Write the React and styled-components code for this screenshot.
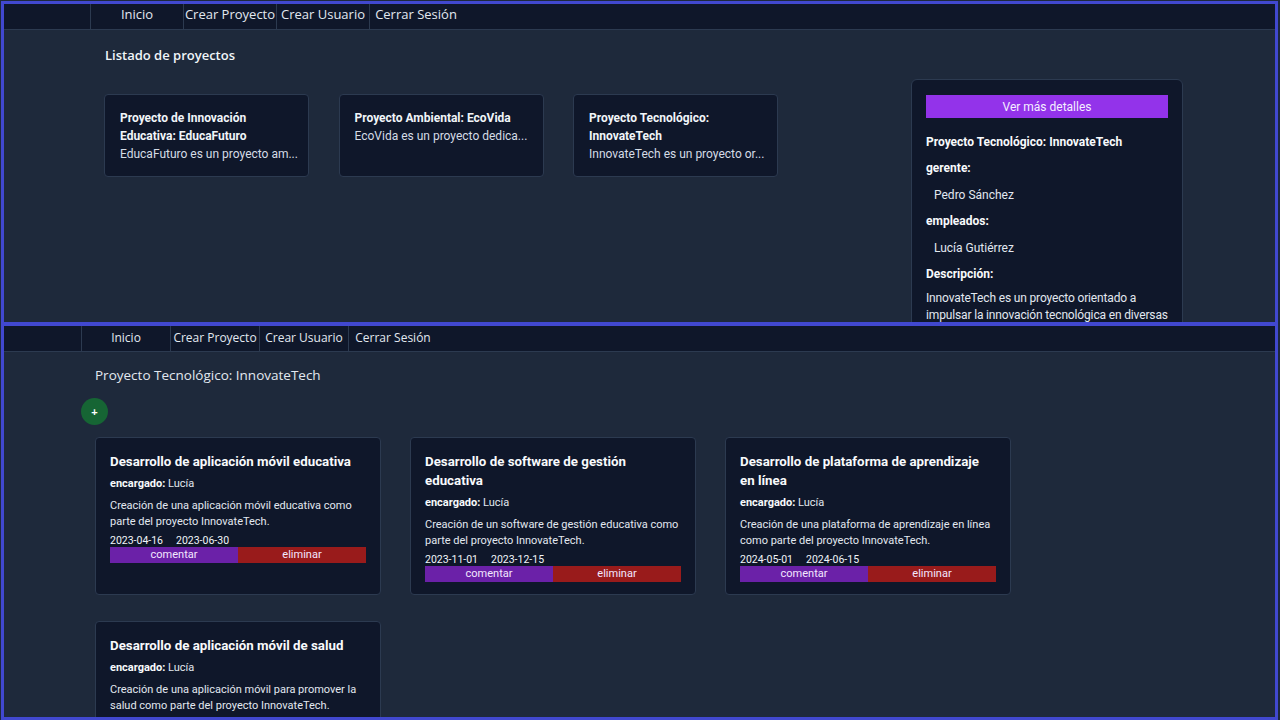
import React from "react";
import styled, { createGlobalStyle } from "styled-components";

const GlobalStyle = createGlobalStyle`
    html, body {
        margin: 0;
        padding: 0;
        background: #1e293b;
    }
    * {
        box-sizing: border-box;
    }
`;

const Stack = styled.div`
    display: flex;
    flex-direction: column;
    width: 1280px;
    height: 720px;
    overflow: hidden;
`;

const Frame = styled.div`
    margin-left: 1px;
    margin-top: ${(p) => p.$top}px;
    width: 1277px;
    height: ${(p) => p.$height}px;
    border: 3px solid #4148cf;
    border-top-width: ${(p) => p.$borderTop}px;
    background: #1e293b;
    overflow: hidden;
    display: flex;
    flex-direction: column;
`;

const Nav = styled.nav`
    display: flex;
    height: ${(p) => p.$h}px;
    flex: 0 0 auto;
    padding-left: ${(p) => p.$pad}px;
    background: #0f172a;
    border-bottom: 1px solid #2c3a50;
`;

const NavItem = styled.a`
    width: ${(p) => p.$w}px;
    display: flex;
    align-items: center;
    justify-content: center;
    padding-bottom: ${(p) => p.$lift}px;
    border-left: 1px solid #2c3a50;
    color: #e2e8f0;
    font-family: "Open Sans", "Noto Sans", sans-serif;
    font-size: ${(p) => p.$size}px;
    white-space: nowrap;
    cursor: pointer;
`;

/* ---------- listado ---------- */

const ListMain = styled.main`
    display: flex;
    align-items: flex-start;
    padding-left: 100px;
    font-family: Roboto, sans-serif;
`;

const ListColumn = styled.section`
    width: 675px;
    padding-top: 16px;
`;

const PageTitle = styled.h2`
    margin: 0 0 30px 1px;
    font-family: "Open Sans", "Noto Sans", sans-serif;
    font-size: 13px;
    line-height: 18px;
    font-weight: 600;
    color: #f1f5f9;
`;

const ProjectGrid = styled.div`
    display: grid;
    grid-template-columns: repeat(3, 205px);
    column-gap: 29.5px;
`;

const ProjectCard = styled.div`
    background: #0f172a;
    border: 1px solid #2c3a50;
    border-radius: 4px;
    padding: 14px 15px 13px;
    min-height: 83px;
    cursor: pointer;
`;

const ProjectName = styled.div`
    font-size: 12px;
    line-height: 18px;
    font-weight: 700;
    color: #f1f5f9;
`;

const ProjectSummary = styled.div`
    font-size: 12px;
    line-height: 18px;
    color: #d5dce6;
    white-space: nowrap;
`;

const Details = styled.aside`
    margin-left: 132px;
    margin-top: 49px;
    width: 272px;
    padding: 15px 14px 20px;
    background: #0f172a;
    border: 1px solid #2c3a50;
    border-radius: 6px;
    display: flex;
    flex-direction: column;
    gap: 8.5px;
    font-family: Roboto, sans-serif;
    color: #e2e8f0;
`;

const MoreButton = styled.button`
    height: 23px;
    width: 100%;
    margin-bottom: 6px;
    border: none;
    background: #9333ea;
    color: #f5efff;
    font-family: Roboto, sans-serif;
    font-size: 12px;
    cursor: pointer;
`;

const DetailLabel = styled.div`
    font-size: 12px;
    line-height: 18px;
    font-weight: 700;
    color: #f8fafc;
`;

const DetailValue = styled.div`
    font-size: 12px;
    line-height: 18px;
    padding-left: ${(p) => (p.$indent ? 8 : 0)}px;
    color: #e2e8f0;
`;

const DetailText = styled.p`
    margin: -2px 0 0;
    font-size: 12px;
    line-height: 17px;
    letter-spacing: -0.15px;
    color: #e2e8f0;
`;

/* ---------- tareas ---------- */

const TaskMain = styled.main`
    padding: 13px 0 0 77px;
    font-family: Roboto, sans-serif;
`;

const TaskTitle = styled.h2`
    margin: 0 0 12px 14px;
    font-family: "Open Sans", "Noto Sans", sans-serif;
    font-size: 13.5px;
    line-height: 20px;
    font-weight: 400;
    color: #e2e8f0;
`;

const AddButton = styled.button`
    width: 27px;
    height: 27px;
    margin-top: 1px;
    border-radius: 50%;
    border: none;
    background: #166534;
    color: #ffffff;
    font-size: 11px;
    font-weight: 700;
    padding: 0;
    cursor: pointer;
`;

const TaskGrid = styled.div`
    margin: 12px 0 0 14px;
    display: grid;
    grid-template-columns: repeat(3, 286px);
    column-gap: 29px;
    row-gap: 26px;
`;

const TaskCard = styled.div`
    background: #0f172a;
    border: 1px solid #2c3a50;
    border-radius: 4px;
    padding: 14px 14px 12px;
    display: flex;
    flex-direction: column;
`;

const TaskName = styled.div`
    font-size: 13.3px;
    line-height: 19px;
    font-weight: 700;
    color: #f8fafc;
`;

const Owner = styled.div`
    margin-top: 5px;
    font-size: 11px;
    line-height: 16px;
    color: #e2e8f0;

    b {
        font-weight: 700;
        color: #f8fafc;
    }
`;

const TaskText = styled.div`
    margin-top: 6px;
    font-size: 11px;
    line-height: 16px;
    color: #e2e8f0;
`;

const Dates = styled.div`
    margin-top: 4px;
    display: flex;
    gap: 13px;
    font-size: 10.5px;
    line-height: 13px;
    color: #f1f5f9;
`;

const Actions = styled.div`
    display: grid;
    grid-template-columns: 1fr 1fr;
    height: 16px;
`;

const ActionButton = styled.button`
    border: none;
    padding: 0;
    background: ${(p) => (p.$danger ? "#991b1b" : "#6b21a8")};
    color: #f3e8ff;
    font-family: Roboto, sans-serif;
    font-size: 11px;
    line-height: 16px;
    cursor: pointer;
`;

const links = ["Inicio", "Crear Proyecto", "Crear Usuario", "Cerrar Sesión"];

const projects = [
    { name: "Proyecto de Innovación Educativa: EducaFuturo", summary: "EducaFuturo es un proyecto am..." },
    { name: "Proyecto Ambiental: EcoVida", summary: "EcoVida es un proyecto dedica..." },
    { name: "Proyecto Tecnológico: InnovateTech", summary: "InnovateTech es un proyecto or..." },
];

const tasks = [
    {
        name: "Desarrollo de aplicación móvil educativa",
        text: "Creación de una aplicación móvil educativa como parte del proyecto InnovateTech.",
        start: "2023-04-16",
        end: "2023-06-30",
    },
    {
        name: "Desarrollo de software de gestión educativa",
        text: "Creación de un software de gestión educativa como parte del proyecto InnovateTech.",
        start: "2023-11-01",
        end: "2023-12-15",
    },
    {
        name: "Desarrollo de plataforma de aprendizaje en línea",
        text: "Creación de una plataforma de aprendizaje en línea como parte del proyecto InnovateTech.",
        start: "2024-05-01",
        end: "2024-06-15",
    },
    {
        name: "Desarrollo de aplicación móvil de salud",
        text: "Creación de una aplicación móvil para promover la salud como parte del proyecto InnovateTech.",
        start: "2024-07-01",
        end: "2024-09-30",
    },
];

function TopNav({ pad, w, size, lift }) {
    return (
        <Nav $h={26} $pad={pad}>
            {links.map((l) => (
                <NavItem key={l} $w={w} $size={size} $lift={lift}>{l}</NavItem>
            ))}
        </Nav>
    );
}

export default function App() {
    return (
        <Stack>
            <GlobalStyle />

            <Frame $top={1} $height={324} $borderTop={3}>
                <TopNav pad={86} w={93} size={13} lift={5} />
                <ListMain>
                    <ListColumn>
                        <PageTitle>Listado de proyectos</PageTitle>
                        <ProjectGrid>
                            {projects.map((p) => (
                                <ProjectCard key={p.name}>
                                    <ProjectName>{p.name}</ProjectName>
                                    <ProjectSummary>{p.summary}</ProjectSummary>
                                </ProjectCard>
                            ))}
                        </ProjectGrid>
                    </ListColumn>

                    <Details>
                        <MoreButton>Ver más detalles</MoreButton>
                        <DetailLabel>Proyecto Tecnológico: InnovateTech</DetailLabel>
                        <DetailLabel>gerente:</DetailLabel>
                        <DetailValue $indent>Pedro Sánchez</DetailValue>
                        <DetailLabel>empleados:</DetailLabel>
                        <DetailValue $indent>Lucía Gutiérrez</DetailValue>
                        <DetailLabel>Descripción:</DetailLabel>
                        <DetailText>
                            InnovateTech es un proyecto orientado a impulsar la innovación tecnológica en diversas
                            áreas, desarrollando soluciones para empresas e instituciones.
                        </DetailText>
                    </Details>
                </ListMain>
            </Frame>

            <Frame $top={0} $height={395} $borderTop={1}>
                <TopNav pad={77} w={89} size={12} lift={2} />
                <TaskMain>
                    <TaskTitle>Proyecto Tecnológico: InnovateTech</TaskTitle>
                    <AddButton>+</AddButton>
                    <TaskGrid>
                        {tasks.map((t) => (
                            <TaskCard key={t.name}>
                                <TaskName>{t.name}</TaskName>
                                <Owner><b>encargado:</b> Lucía</Owner>
                                <TaskText>{t.text}</TaskText>
                                <Dates>
                                    <span>{t.start}</span>
                                    <span>{t.end}</span>
                                </Dates>
                                <Actions>
                                    <ActionButton>comentar</ActionButton>
                                    <ActionButton $danger>eliminar</ActionButton>
                                </Actions>
                            </TaskCard>
                        ))}
                    </TaskGrid>
                </TaskMain>
            </Frame>
        </Stack>
    );
}
